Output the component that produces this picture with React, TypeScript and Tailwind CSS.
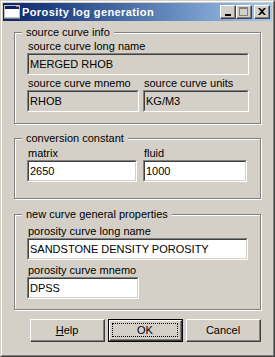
import React from "react";

// Win2000-style "Porosity log generation" dialog

const font = { fontFamily: '"Liberation Sans", Arial, sans-serif' };

function Edit({ value, width, disabled }: { value: string; width: number; disabled?: boolean }) {
    return (
        <div
            className="h-[22px] border-t border-l border-t-[#808080] border-l-[#808080] border-b border-r border-b-white border-r-white"
            style={{ width }}
        >
            <div
                className={
                    "h-full border-t border-l border-t-[#404040] border-l-[#404040] border-b border-r border-b-[#d4d0c8] border-r-[#d4d0c8] px-[1px] text-[11px] leading-[18px] text-black whitespace-nowrap overflow-hidden " +
                    (disabled ? "bg-[#d4d0c8]" : "bg-white")
                }
            >
                {value}
            </div>
        </div>
    );
}

function Label({ children }: { children: React.ReactNode }) {
    return <div className="pl-[1px] text-[11px] leading-[13px] text-black whitespace-nowrap">{children}</div>;
}

function GroupBox({ title, className, children }: { title: string; className: string; children: React.ReactNode }) {
    return (
        <div
            className={
                "relative mx-[11px] border border-[#808080] shadow-[1px_1px_0_#fff,inset_1px_1px_0_#fff] pl-[12px] " +
                className
            }
        >
            <div className="absolute left-[7px] top-[-7px] bg-[#d4d0c8] px-[4px] text-[11px] leading-[13px] text-black whitespace-nowrap">
                {title}
            </div>
            {children}
        </div>
    );
}

function Button({ children, isDefault }: { children: React.ReactNode; isDefault?: boolean }) {
    if (isDefault) {
        return (
            <div className="w-[75px] h-[23px] border border-black">
                <div className="h-full border-t border-l border-t-white border-l-white border-b border-r border-b-[#404040] border-r-[#404040]">
                    <div className="h-full border-b border-r border-b-[#808080] border-r-[#808080] p-[2px]">
                        <div className="h-full border border-dotted border-black flex items-center justify-center text-[11px] text-black">
                            {children}
                        </div>
                    </div>
                </div>
            </div>
        );
    }
    return (
        <div className="w-[75px] h-[23px] border-t border-l border-t-white border-l-white border-b border-r border-b-[#404040] border-r-[#404040]">
            <div className="h-full border-b border-r border-b-[#808080] border-r-[#808080] flex items-center justify-center text-[11px] text-black">
                {children}
            </div>
        </div>
    );
}

function CaptionButton({ children, className }: { children: React.ReactNode; className?: string }) {
    return (
        <div
            className={
                "w-[16px] h-[14px] bg-[#d4d0c8] border-t border-l border-t-white border-l-white border-b border-r border-b-[#404040] border-r-[#404040] " +
                (className ?? "")
            }
        >
            <div className="h-full border-b border-r border-b-[#808080] border-r-[#808080] flex items-center justify-center">
                {children}
            </div>
        </div>
    );
}

export default function App() {
    return (
        <div style={font} className="w-[275px] h-[357px] bg-[#d4d0c8] select-none">
            <div className="h-full border-t border-l border-t-[#d4d0c8] border-l-[#d4d0c8] border-b border-r border-b-[#404040] border-r-[#404040]">
                <div className="h-full border-t border-l border-t-white border-l-white border-b border-r border-b-[#808080] border-r-[#808080] p-[1px] flex flex-col">
                    {/* title bar */}
                    <div className="h-[18px] flex items-center bg-gradient-to-r from-[#0a246a] to-[#a6caf0] pl-[1px] pr-[2px]">
                        <svg width="16" height="16" viewBox="0 0 16 16" className="shrink-0">
                            <rect x="0.5" y="1.5" width="15" height="12" fill="#ffffff" stroke="#c0c0c0" />
                            <rect x="1" y="2" width="14" height="3" fill="#0a246a" />
                            <rect x="12" y="2" width="3" height="1" fill="#e08040" />
                            <rect x="0" y="14" width="16" height="1" fill="#808080" />
                        </svg>
                        <div className="ml-[2px] text-[11px] font-bold tracking-[0.4px] text-white whitespace-nowrap leading-[18px]">
                            Porosity log generation
                        </div>
                        <div className="ml-auto flex items-center">
                            <CaptionButton>
                                <svg width="8" height="8" viewBox="0 0 8 8">
                                    <rect x="1" y="6" width="6" height="2" fill="#000" />
                                </svg>
                            </CaptionButton>
                            <CaptionButton>
                                <svg width="9" height="9" viewBox="0 0 9 9">
                                    <rect x="0.5" y="0.5" width="8" height="8" fill="none" stroke="#808080" />
                                    <rect x="0" y="0" width="9" height="2" fill="#808080" />
                                </svg>
                            </CaptionButton>
                            <CaptionButton className="ml-[2px]">
                                <svg width="8" height="7" viewBox="0 0 8 7">
                                    <path d="M0 0h2l2 2 2-2h2L5 3.5 8 7H6L4 5 2 7H0l3-3.5z" fill="#000" />
                                </svg>
                            </CaptionButton>
                        </div>
                    </div>

                    {/* source curve info */}
                    <GroupBox title="source curve info" className="mt-[11px] h-[92px] pt-[7px]">
                        <Label>source curve long name</Label>
                        <Edit value="MERGED RHOB" width={222} disabled />
                        <div className="mt-[2px] flex gap-[4px]">
                            <div>
                                <Label>source curve mnemo</Label>
                                <Edit value="RHOB" width={112} disabled />
                            </div>
                            <div>
                                <Label>source curve units</Label>
                                <Edit value="KG/M3" width={106} disabled />
                            </div>
                        </div>
                    </GroupBox>

                    {/* conversion constant */}
                    <GroupBox title="conversion constant" className="mt-[14px] h-[61px] pt-[8px]">
                        <div className="flex gap-[6px]">
                            <div>
                                <Label>matrix</Label>
                                <Edit value="2650" width={110} />
                            </div>
                            <div>
                                <Label>fluid</Label>
                                <Edit value="1000" width={104} />
                            </div>
                        </div>
                    </GroupBox>

                    {/* new curve general properties */}
                    <GroupBox title="new curve general properties" className="mt-[15px] h-[96px] pt-[10px]">
                        <Label>porosity curve long name</Label>
                        <Edit value="SANDSTONE DENSITY POROSITY" width={221} />
                        <div className="mt-[4px]">
                            <Label>porosity curve mnemo</Label>
                            <Edit value="DPSS" width={112} />
                        </div>
                    </GroupBox>

                    {/* buttons */}
                    <div className="mt-[9px] flex justify-end gap-[3px] pr-[11px]">
                        <Button>
                            <span>
                                <span className="underline underline-offset-[1px]">H</span>elp
                            </span>
                        </Button>
                        <Button isDefault>OK</Button>
                        <Button>Cancel</Button>
                    </div>
                </div>
            </div>
        </div>
    );
}
